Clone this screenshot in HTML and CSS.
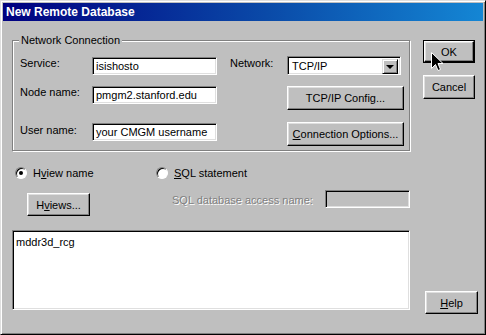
FILE: index.html
```html
<!DOCTYPE html>
<html lang="en">
<head>
    <meta charset="UTF-8">
    <title>New Remote Database</title>
    <link rel="stylesheet" href="styles.css">
</head>
<body>
    <div class="window">
        <div class="titlebar">New Remote Database</div>

        <div class="dialog-body">
            <div class="main">
                <fieldset class="group">
                    <legend>Network Connection</legend>
                    <div class="group-inner">
                        <div class="row row-first">
                            <span class="label lbl-top">Service:</span>
                            <div class="field fld-down">isishosto</div>
                            <span class="label label-net lbl-top">Network:</span>
                            <div class="select">
                                <span class="select-value">TCP/IP</span>
                                <span class="drop-btn"><span class="tri"></span></span>
                            </div>
                        </div>
                        <div class="row row-second">
                            <span class="label lbl-up">Node name:</span>
                            <div class="field">pmgm2.stanford.edu</div>
                            <span class="spacer"></span>
                            <button class="btn btn-wide">TCP/IP Config...</button>
                        </div>
                        <div class="row row-third">
                            <span class="label lbl-down">User name:</span>
                            <div class="field fld-down">your CMGM username</div>
                            <span class="spacer"></span>
                            <button class="btn btn-wide"><u>C</u>onnection Options...</button>
                        </div>
                    </div>
                </fieldset>

                <div class="radio-row">
                    <label class="radio-item">
                        <span class="radio checked"></span>
                        <span>H<u>v</u>iew name</span>
                    </label>
                    <label class="radio-item">
                        <span class="radio"></span>
                        <span><u>S</u>QL statement</span>
                    </label>
                </div>

                <div class="query-row">
                    <button class="btn btn-hviews">H<u>v</u>iews...</button>
                    <span class="disabled-label">SQL database access name:</span>
                    <div class="field field-disabled"></div>
                </div>

                <div class="listbox">mddr3d_rcg</div>
            </div>

            <div class="side">
                <div class="default-frame">
                    <button class="btn btn-side">OK</button>
                </div>
                <button class="btn btn-side btn-cancel">Cancel</button>
                <button class="btn btn-side btn-help"><u>H</u>elp</button>
            </div>
        </div>

        <svg class="cursor" width="13" height="20" viewBox="0 0 13 20">
            <path d="M0.5 0.5 L0.5 16.5 L4.5 12.5 L7 18.5 L9.5 17.5 L7 11.5 L12 11.5 Z" fill="#000" stroke="#fff" stroke-width="1"/>
        </svg>
    </div>
</body>
</html>
```

FILE: styles.css
```css
* {
    box-sizing: border-box;
}
body {
    margin: 0;
    background: #bfbfbf;
    font-family: 'Liberation Sans', Arial, sans-serif;
    font-size: 11px;
    line-height: 13px;
    color: #000;
}
.window {
    position: relative;
    width: 486px;
    height: 335px;
    padding: 2px;
    background: #bfbfbf;
    border: 1px solid;
    border-color: #dfdfdf #000 #000 #dfdfdf;
    box-shadow: inset 1px 1px #fff, inset -1px -1px #808080;
}
.titlebar {
    height: 18px;
    line-height: 18px;
    padding-left: 3px;
    background: linear-gradient(90deg, #000080, #0a4aa8 55%, #1486d4);
    color: #fff;
    font-weight: bold;
    font-size: 12px;
}
.dialog-body {
    display: flex;
    padding: 13px 0 0 9px;
}
.main {
    width: 398px;
}

/* group box */
.group {
    margin: 0;
    padding: 0;
    min-width: 0;
    border: 1px solid #808080;
    box-shadow: inset 1px 1px #fff, 1px 1px #fff;
}
.group legend {
    margin-left: 6px;
    padding: 0 2px;
    background: #bfbfbf;
    line-height: 13px;
}
.group-inner {
    padding: 9px 0 4px 7px;
}
.row {
    display: flex;
    align-items: flex-start;
}
.row-first { height: 19px; }
.row-second { height: 24px; margin-top: 11px; }
.row-third { height: 24px; margin-top: 12px; }
.label {
    width: 72px;
    white-space: nowrap;
}
.lbl-top { margin-top: 1px; }
.lbl-up { margin-top: 0; }
.lbl-down { margin-top: 2px; }
.label-net {
    width: 57px;
    margin-left: 13px;
}
.spacer {
    width: 70px;
}

/* sunken fields */
.field {
    width: 125px;
    height: 18px;
    padding: 2px 0 0 3px;
    background: #fff;
    border: 1px solid;
    border-color: #808080 #fff #fff #808080;
    box-shadow: inset 1px 1px #000, inset -1px -1px #dfdfdf;
    white-space: nowrap;
    overflow: hidden;
}
.fld-down { margin-top: 1px; }
.field-disabled {
    width: 85px;
    background: #bfbfbf;
}
.select {
    display: flex;
    width: 114px;
    height: 19px;
    padding: 2px;
    background: #fff;
    border: 1px solid;
    border-color: #808080 #fff #fff #808080;
    box-shadow: inset 1px 1px #000, inset -1px -1px #dfdfdf;
}
.select-value {
    flex-grow: 1;
    padding: 1px 0 0 2px;
}
.drop-btn {
    display: flex;
    align-items: center;
    justify-content: center;
    width: 16px;
    height: 15px;
    background: #bfbfbf;
    border: 1px solid;
    border-color: #dfdfdf #000 #000 #dfdfdf;
    box-shadow: inset 1px 1px #fff, inset -1px -1px #808080;
}
.tri {
    width: 0;
    height: 0;
    border-left: 4px solid transparent;
    border-right: 4px solid transparent;
    border-top: 4px solid #000;
}

/* raised buttons */
.btn {
    padding: 0;
    font-family: inherit;
    font-size: 11px;
    color: #000;
    background: #bfbfbf;
    border: 1px solid;
    border-color: #fff #000 #000 #fff;
    box-shadow: inset -1px -1px #808080, inset 1px 1px #dfdfdf;
    cursor: pointer;
}
.btn-wide {
    width: 117px;
    height: 24px;
}

/* radios */
.radio-row {
    display: flex;
    margin-top: 16px;
    height: 12px;
}
.radio-item {
    display: flex;
    align-items: center;
    gap: 6px;
}
.radio-item:first-child {
    width: 141px;
    margin-left: 3px;
}
.radio {
    position: relative;
    width: 12px;
    height: 12px;
    border-radius: 50%;
    background: #fff;
    border: 1px solid;
    border-color: #808080 #fff #fff #808080;
    box-shadow: inset 1px 1px #000;
}
.radio.checked::after {
    content: '';
    position: absolute;
    left: 3px;
    top: 3px;
    width: 4px;
    height: 4px;
    border-radius: 50%;
    background: #000;
}

.query-row {
    display: flex;
    align-items: flex-start;
    margin-top: 11px;
}
.btn-hviews {
    width: 63px;
    height: 23px;
    margin: 3px 0 0 15px;
}
.disabled-label {
    width: 153px;
    margin: 4px 0 0 82px;
    color: #808080;
    text-shadow: 1px 1px #fff;
    white-space: nowrap;
}

.listbox {
    height: 80px;
    margin-top: 14px;
    padding: 5px 0 0 3px;
    background: #fff;
    border: 1px solid;
    border-color: #808080 #fff #fff #808080;
    box-shadow: inset 1px 1px #000, inset -1px -1px #dfdfdf;
}

/* right-hand buttons */
.side {
    display: flex;
    flex-direction: column;
    margin: 6px 0 0 13px;
}
.default-frame {
    width: 52px;
    height: 23px;
    border: 1px solid #000;
}
.default-frame .btn-side {
    width: 50px;
    height: 21px;
}
.btn-side {
    width: 52px;
    height: 24px;
}
.btn-cancel {
    margin-top: 12px;
}
.btn-help {
    width: 53px;
    height: 23px;
    margin: 192px 0 0 2px;
}

/* mouse pointer resting on OK */
.cursor {
    position: absolute;
    left: 430px;
    top: 51px;
}
```
